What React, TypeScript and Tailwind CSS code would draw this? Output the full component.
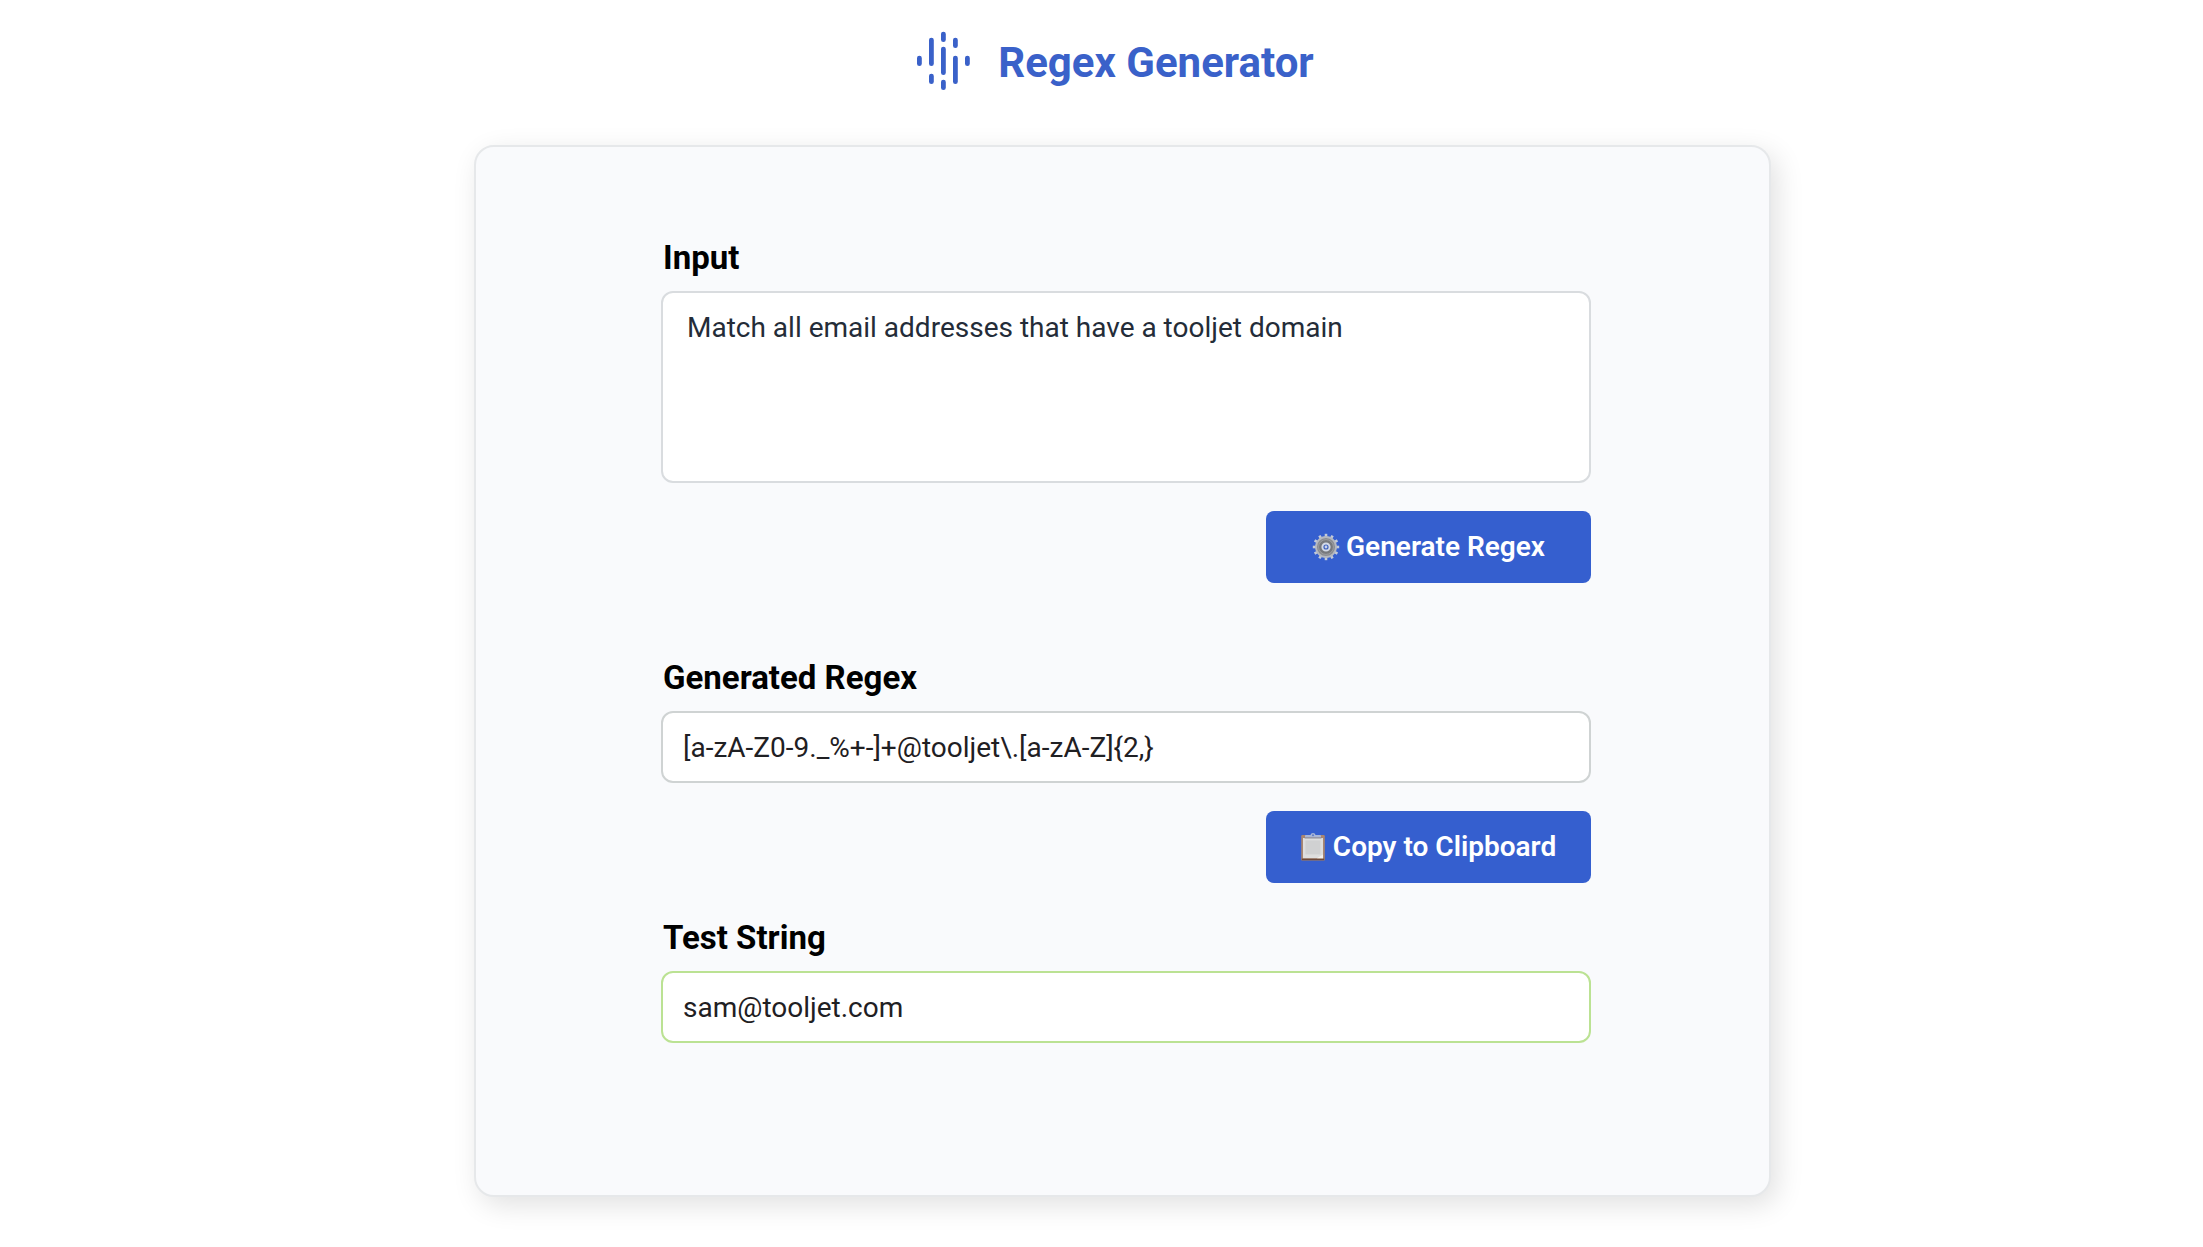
import React, { useState } from 'react';

interface FieldProps {
    id: string;
    label: string;
    children: React.ReactNode;
}

interface ActionButtonProps {
    icon: React.ReactNode;
    onClick?: () => void;
    children: React.ReactNode;
}

const Logo = () => (
    <svg
        className="h-[60px] w-[53px] shrink-0 text-[#3a61c9]"
        viewBox="0 0 53 60"
        fill="none"
        stroke="currentColor"
        strokeWidth="4.8"
        strokeLinecap="round"
        aria-hidden="true"
    >
        <path d="M2.4 27.1v5.6M14.4 9.1v23.6M14.4 45.1v5.6M26.4 3.1v5.6M26.4 18.1v23.6M26.4 51.1v5.6M38.4 9.1v5.6M38.4 27.1v23.6M50.4 27.1v5.6" />
    </svg>
);

const GearIcon = () => (
    <svg className="size-7 shrink-0" viewBox="0 0 28 28" fill="none" aria-hidden="true">
        <g stroke="#c3cad8" strokeWidth="2.6">
            {[0, 30, 60, 90, 120, 150].map((angle) => (
                <path key={angle} d="M14 0.8v26.4" transform={`rotate(${angle} 14 14)`} />
            ))}
        </g>
        <circle cx="14" cy="14" r="10" fill="#8b8d91" stroke="#b4b8c0" strokeWidth="1.8" />
        <circle cx="14" cy="14" r="7.4" fill="#77797d" stroke="#9b9da1" strokeWidth="1" />
        <circle cx="14" cy="14" r="3.6" fill="#3f62bd" stroke="#d3d9e6" strokeWidth="2" />
        <circle cx="14" cy="14" r="1.4" fill="#c9d3ec" />
    </svg>
);

const ClipboardIcon = () => (
    <svg className="h-7 w-[26px] shrink-0" viewBox="0 0 26 28" fill="none" aria-hidden="true">
        <rect x="0.2" y="2" width="23.6" height="25.6" rx="1.2" fill="#a98670" />
        <rect x="0.8" y="25.6" width="22.4" height="1.6" fill="#6d4a3c" />
        <rect x="2" y="5" width="20" height="20.2" fill="#dedede" />
        <rect x="4.4" y="7.4" width="15" height="14" fill="#d0d1d2" />
        <path d="M2 25.2h14l6-3.6v3.6z" fill="#f4f1ec" />
        <path d="M4 4.8V3.2c0-.7.5-1.2 1.2-1.2h4.2a2.7 2.7 0 0 1 5.2 0h4.2c.7 0 1.2.5 1.2 1.2v1.6z" fill="#a9b6d6" />
        <circle cx="12" cy="2.2" r="1" fill="#5f7cc4" />
        <path d="M3.6 5h16.8" stroke="#7c7f88" strokeWidth="0.8" />
    </svg>
);

const Field: React.FC<FieldProps> = ({ id, label, children }) => (
    <div className="flex flex-col gap-[13px]">
        <label htmlFor={id} className="pl-[2px] text-[33px] leading-10 font-bold text-black">
            {label}
        </label>
        {children}
    </div>
);

const ActionButton: React.FC<ActionButtonProps> = ({ icon, onClick, children }) => (
    <button
        type="button"
        onClick={onClick}
        className="flex h-[72px] w-[325px] items-center justify-center gap-[6px] self-end rounded-lg bg-[#355fcf] text-[28px] font-semibold text-white hover:bg-[#2c52b8]"
    >
        {icon}
        {children}
    </button>
);

const App = () => {
    const [prompt, setPrompt] = useState('Match all email addresses that have a tooljet domain');
    const [regex, setRegex] = useState('[a-zA-Z0-9._%+-]+@tooljet\\.[a-zA-Z]{2,}');
    const [testString, setTestString] = useState('sam@tooljet.com');

    let isMatch = false;
    try {
        isMatch = new RegExp(regex).test(testString);
    } catch {
        isMatch = false;
    }

    const copyRegex = () => {
        navigator.clipboard.writeText(regex);
    };

    return (
        <div className="min-h-screen bg-white pb-[50px] font-['Roboto',sans-serif]">
            <header className="flex items-end justify-center gap-7 pt-[31px] pb-[54px] pl-7">
                <Logo />
                <h1 className="text-[42px] leading-[56px] font-bold text-[#3a61c9]">Regex Generator</h1>
            </header>

            <main className="pl-[42px]">
                <div className="mx-auto flex max-w-[1297px] flex-col rounded-[20px] border-2 border-[#e6e8ea] bg-[#f9fafc] pt-[91px] pr-[178px] pb-[152px] pl-[185px] shadow-[6px_8px_28px_rgba(0,0,0,0.12)]">
                    <Field id="prompt" label="Input">
                        <textarea
                            id="prompt"
                            value={prompt}
                            onChange={(e) => setPrompt(e.target.value)}
                            className="h-[192px] w-full resize-none rounded-xl border-2 border-[#d9dcdf] bg-white px-6 py-[15px] text-[28px] leading-10 text-[#242c38] outline-none"
                        />
                    </Field>
                    <div className="mt-7 flex flex-col">
                        <ActionButton icon={<GearIcon />}>Generate Regex</ActionButton>
                    </div>

                    <div className="mt-[75px]">
                        <Field id="regex" label="Generated Regex">
                            <input
                                id="regex"
                                type="text"
                                value={regex}
                                onChange={(e) => setRegex(e.target.value)}
                                className="h-[72px] w-full rounded-xl border-2 border-[#cfd3d3] bg-white px-5 text-[28px] text-[#1f2023] outline-none"
                            />
                        </Field>
                    </div>
                    <div className="mt-7 flex flex-col">
                        <ActionButton icon={<ClipboardIcon />} onClick={copyRegex}>Copy to Clipboard</ActionButton>
                    </div>

                    <div className="mt-[35px]">
                        <Field id="test-string" label="Test String">
                            <input
                                id="test-string"
                                type="text"
                                value={testString}
                                onChange={(e) => setTestString(e.target.value)}
                                className={`h-[72px] w-full rounded-xl border-2 bg-white px-5 text-[28px] text-[#1f2023] outline-none ${
                                    isMatch ? 'border-[#bbe293]' : 'border-[#f0a3a3]'
                                }`}
                            />
                        </Field>
                    </div>
                </div>
            </main>
        </div>
    );
};

export default App;
